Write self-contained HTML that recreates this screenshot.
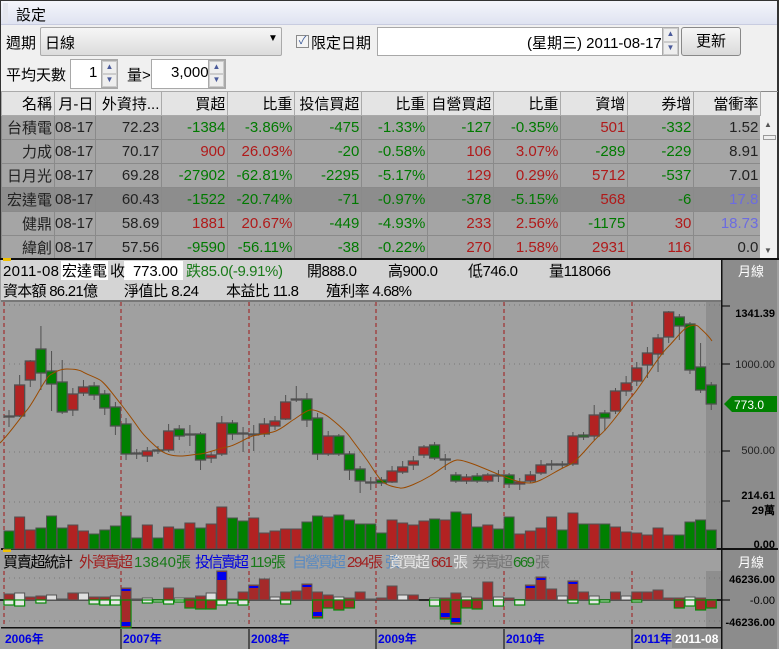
<!DOCTYPE html>
<html><head><meta charset="utf-8">
<style>
*{margin:0;padding:0;box-sizing:border-box}
body{width:779px;height:649px;overflow:hidden;background:#f0f0f0;font-family:"Liberation Sans","Noto Sans CJK TC",sans-serif;font-size:15px;color:#000;position:relative}
.a{position:absolute;white-space:nowrap}
.box{position:absolute;background:#fff;border:1px solid #a8a8a8}
.spin{position:absolute;width:17px;background:#eee;border:1px solid #aaa}
.spin div{height:50%;border:1px solid #ccc;font-size:8px;color:#4a5a9a;text-align:center;line-height:10px}
table{position:absolute;left:1px;top:91px;border-collapse:collapse;table-layout:fixed}
td{height:24px;border:1px solid #8a8a8a;text-align:right;padding-right:2px;font-size:15px;overflow:hidden;white-space:nowrap;background:#a5a5a5;color:#222}
tr.h td{background:#e4e4e4;border-color:#aaa;color:#000}
tr.s td{background:#8d8d8d}
.g{color:#007a00!important}.r{color:#b01a1a!important}.b{color:#6c6ce0!important}
</style></head><body>
<div class="a" style="left:0;top:0;width:779px;height:649px;border:1px solid #333;border-right:2px solid #333"></div>
<div class="a" style="left:1px;top:1px;width:776px;height:24px;background:linear-gradient(#f4f5fb,#dfe3f1);border-bottom:1px solid #c8cce0"></div>
<div class="a" style="left:3px;top:3px;width:5px;height:20px;background:#e4e6ee"></div>
<div class="a" style="left:16px;top:4px">設定</div>
<div class="a" style="left:6px;top:32px">週期</div>
<div class="a" style="left:40px;top:27px;width:242px;height:29px;border:1px solid #aaa;border-radius:2px;background:linear-gradient(#f6f6f6,#dcdcdc)"></div>
<div class="a" style="left:45px;top:32px">日線</div>
<div class="a" style="left:268px;top:33px;font-size:10px">▼</div>
<div class="a" style="left:296px;top:35px;width:13px;height:13px;border:1px solid #8a8a8a;background:#f4f4f4;font-size:11px;line-height:11px;color:#3a5a9a;text-align:center">✓</div>
<div class="a" style="left:311px;top:32px">限定日期</div>
<div class="box" style="left:377px;top:27px;width:302px;height:29px"></div>
<div class="a" style="left:527px;top:32px">(星期三) 2011-08-17</div>
<div class="spin" style="left:662px;top:27px;height:29px"><div>▲</div><div>▼</div></div>
<div class="a" style="left:681px;top:27px;width:60px;height:29px;border:1px solid #888;border-radius:3px;background:linear-gradient(#f6f6f6,#dadada);text-align:center;line-height:27px">更新</div>
<div class="a" style="left:6px;top:64px">平均天數</div>
<div class="box" style="left:70px;top:59px;width:48px;height:30px"></div>
<div class="a" style="left:89px;top:64px">1</div>
<div class="spin" style="left:101px;top:60px;height:28px"><div>▲</div><div>▼</div></div>
<div class="a" style="left:127px;top:64px">量&gt;</div>
<div class="box" style="left:151px;top:59px;width:75px;height:30px"></div>
<div class="a" style="left:171px;top:64px">3,000</div>
<div class="spin" style="left:208px;top:60px;height:28px"><div>▲</div><div>▼</div></div>
<div class="a" style="left:1px;top:91px;width:777px;height:1px;background:#888"></div>
<table>
<colgroup><col style="width:53px"><col style="width:41px"><col style="width:66px"><col style="width:66px"><col style="width:67px"><col style="width:67px"><col style="width:66px"><col style="width:66px"><col style="width:67px"><col style="width:67px"><col style="width:66px"><col style="width:67px"></colgroup>
<tr class="h"><td>名稱</td><td>月-日</td><td>外資持...</td><td>買超</td><td>比重</td><td>投信買超</td><td>比重</td><td>自營買超</td><td>比重</td><td>資增</td><td>券增</td><td>當衝率</td></tr>
<tr><td>台積電</td><td>08-17</td><td>72.23</td><td class="g">-1384</td><td class="g">-3.86%</td><td class="g">-475</td><td class="g">-1.33%</td><td class="g">-127</td><td class="g">-0.35%</td><td class="r">501</td><td class="g">-332</td><td>1.52</td></tr>
<tr><td>力成</td><td>08-17</td><td>70.17</td><td class="r">900</td><td class="r">26.03%</td><td class="g">-20</td><td class="g">-0.58%</td><td class="r">106</td><td class="r">3.07%</td><td class="g">-289</td><td class="g">-229</td><td>8.91</td></tr>
<tr><td>日月光</td><td>08-17</td><td>69.28</td><td class="g">-27902</td><td class="g">-62.81%</td><td class="g">-2295</td><td class="g">-5.17%</td><td class="r">129</td><td class="r">0.29%</td><td class="r">5712</td><td class="g">-537</td><td>7.01</td></tr>
<tr class="s"><td>宏達電</td><td>08-17</td><td>60.43</td><td class="g">-1522</td><td class="g">-20.74%</td><td class="g">-71</td><td class="g">-0.97%</td><td class="g">-378</td><td class="g">-5.15%</td><td class="r">568</td><td class="g">-6</td><td class="b">17.8</td></tr>
<tr><td>健鼎</td><td>08-17</td><td>58.69</td><td class="r">1881</td><td class="r">20.67%</td><td class="g">-449</td><td class="g">-4.93%</td><td class="r">233</td><td class="r">2.56%</td><td class="g">-1175</td><td class="r">30</td><td class="b">18.73</td></tr>
<tr><td>緯創</td><td>08-17</td><td>57.56</td><td class="g">-9590</td><td class="g">-56.11%</td><td class="g">-38</td><td class="g">-0.22%</td><td class="r">270</td><td class="r">1.58%</td><td class="r">2931</td><td class="r">116</td><td>0.0</td></tr>
</table>
<div class="a" style="left:760px;top:116px;width:17px;height:142px;background:#f0f0f0"></div>
<div class="a" style="left:764px;top:120px;font-size:8px;color:#555">▲</div>
<div class="a" style="left:763px;top:135px;width:13px;height:5px;border:1px solid #999;background:#eee"></div>
<div class="a" style="left:764px;top:246px;font-size:8px;color:#555">▼</div>

<svg class="a" style="left:0;top:258px" width="779" height="391" id="ch" xmlns="http://www.w3.org/2000/svg">
<rect x="0" y="0" width="779" height="391" fill="#a0a0a0"/>
<rect x="0" y="0" width="779" height="2" fill="#111"/>
<rect x="1" y="2" width="721" height="41" fill="#d4d4d4"/>
<rect x="1" y="42" width="721" height="2" fill="#777"/>
<rect x="722" y="2" width="55" height="389" fill="#8c8c8c"/>
<rect x="721" y="2" width="1.5" height="389" fill="#111"/>
<rect x="706" y="44" width="15" height="246" fill="#8e8e8e"/>
<rect x="706" y="313" width="15" height="58" fill="#8e8e8e"/>
<rect x="1" y="290" width="777" height="2" fill="#111"/>
<rect x="1" y="369" width="721" height="1.5" fill="#111"/>
<rect x="3" y="0" width="8" height="3" fill="#f0c000"/>
<rect x="3" y="291" width="8" height="3" fill="#f0c000"/>
<g font-size="15" font-family="Liberation Sans,Noto Sans CJK TC,sans-serif" lengthAdjust="spacingAndGlyphs">
<rect x="61" y="3" width="47" height="19" fill="#fff"/>
<rect x="124" y="3" width="59" height="19" fill="#fff"/>
<text x="3" y="18" textLength="56">2011-08</text><text x="62" y="18" textLength="45">宏達電</text><text x="110" y="18" textLength="13">收</text><text x="133" y="18" textLength="45">773.00</text>
<text x="186" y="18" fill="#1a7a1a" textLength="97">跌85.0(-9.91%)</text><text x="307" y="18" textLength="50">開888.0</text><text x="388" y="18" textLength="50">高900.0</text><text x="468" y="18" textLength="50">低746.0</text><text x="549" y="18" textLength="62">量118066</text>
<text x="3" y="38" textLength="95">資本額 86.21億</text><text x="124" y="38" textLength="75">淨值比 8.24</text><text x="226" y="38" textLength="73">本益比 11.8</text><text x="326" y="38" textLength="86">殖利率 4.68%</text>
<text x="738" y="18" fill="#fff" font-size="13">月線</text>
<text x="738" y="309" fill="#fff" font-size="13">月線</text>
<text x="3" y="309" textLength="70">買賣超統計</text><text x="79" y="309" fill="#a02020" textLength="54">外資賣超</text><text x="134" y="309" fill="#1a7a1a" textLength="57">13840張</text>
<text x="195" y="309" fill="#0000e0" textLength="54">投信賣超</text><text x="250" y="309" fill="#1a7a1a" textLength="36">119張</text>
<text x="292" y="309" fill="#5a8ac0" textLength="54">自營買超</text><text x="347" y="309" fill="#a02020" textLength="36">294張</text>
<text x="385" y="309" fill="#5a8ac0" textLength="5">張</text>
<text x="389" y="309" fill="#e8e8e8" textLength="41">資買超</text><text x="431" y="309" fill="#a02020" textLength="22">661</text><text x="453" y="309" fill="#e8e8e8" textLength="13">張</text>
<text x="472" y="309" fill="#777" textLength="41">券賣超</text><text x="513" y="309" fill="#1a7a1a" textLength="22">669</text><text x="535" y="309" fill="#777" textLength="13">張</text>
</g>
<g font-size="11" font-weight="bold" font-family="Liberation Sans,sans-serif">
<text x="775" y="59" text-anchor="end">1341.39</text>
<text x="775" y="110" text-anchor="end" fill="#222" font-weight="normal">1000.00</text>
<text x="775" y="196" text-anchor="end" fill="#222" font-weight="normal">500.00</text>
<text x="775" y="241" text-anchor="end">214.61</text>
<text x="775" y="256" text-anchor="end">29萬</text>
<text x="775" y="290" text-anchor="end">0.00</text>
<text x="775" y="325" text-anchor="end">46236.00</text>
<text x="775" y="346" text-anchor="end" font-weight="normal">-0.00</text>
<text x="775" y="368" text-anchor="end">-46236.00</text>
</g>
<path d="M722 48h8M722 106h8M722 193h8M722 243h8M722 342h8" stroke="#000"/>
<polygon points="724,146 732,138 777,138 777,154 732,154" fill="#008000"/>
<text x="734" y="151" font-size="12" fill="#fff" font-family="Liberation Sans,sans-serif">773.0</text>
<g stroke="#777" stroke-dasharray="1,4"><path d="M4 47H721M4 106H721M4 194H721M4 244H721M4 320H721M4 363H721"/></g>
<g stroke="#a01818" stroke-dasharray="4,3"><path d="M4 44V290M121 44V290M249 44V290M376 44V290M504 44V290M632 44V290M4 313V369M121 313V369M249 313V369M376 313V369M504 313V369M632 313V369"/></g>
<g id="cd"></g>
<path fill="none" stroke="#9a4a00" stroke-width="1" d="M0 185 C10 175 20 160 27 152 S45 120 50 117 S60 111 67 111 S80 112 83 114 S95 119 100 122 S112 135 120 145 S135 165 140 172 S155 188 160 192 S172 198 180 198 S195 196 200 196 S220 190 227 189 S243 182 250 179 S265 176 273 174 S288 165 293 162 S305 153 310 152 S325 156 330 160 S345 172 350 179 S362 195 367 202 S378 220 383 224 S395 229 400 230 S420 224 430 218 S450 203 457 202 S490 213 500 217 S520 225 530 225 S555 213 567 208 S590 185 600 177 S625 146 633 137 S657 100 667 90 S683 70 690 68 S698 68 700 70 S708 77 712 83"/>
<line x1="0" y1="342" x2="721" y2="342" stroke="#000" stroke-width="1.5"/>
<g id="bb"></g>
<g font-size="12" font-weight="bold" fill="#0000e0" font-family="Liberation Sans,Noto Sans CJK TC,sans-serif">
<text x="5" y="385">2006年</text><text x="123" y="385">2007年</text><text x="251" y="385">2008年</text><text x="378" y="385">2009年</text><text x="506" y="385">2010年</text><text x="634" y="385">2011年</text>
</g>
<rect x="672" y="371" width="49" height="19" fill="#8c8c8c"/>
<text x="675" y="385" font-size="12" font-weight="bold" fill="#fff" font-family="Liberation Sans,sans-serif">2011-08</text>
<path d="M121 371V391M249 371V391M376 371V391M504 371V391M632 371V391" stroke="#000"/>
</svg>
<script>
var C=[[416,416,410,427],[416,385,375,417],[380,361,360,387],[349,373,326,390],[371,384,351,411],[382,412,360,414],[410,394,388,416],[393,387,380,396],[386,395,382,400],[394,408,390,415],[407,426,402,435],[424,454,418,460],[453,453,449,459],[456,451,447,462],[450,450,446,454],[450,431,424,452],[429,436,425,440],[434,434,425,446],[434,460,432,470],[458,455,452,463],[454,423,416,456],[423,434,420,440],[433,433,427,452],[434,434,425,451],[434,424,418,437],[426,421,416,430],[419,402,395,420],[399,399,386,402],[399,420,393,427],[418,454,413,460],[454,436,431,456],[436,454,434,456],[454,470,451,480],[469,481,466,493],[482,482,477,490],[480,483,477,486],[482,471,466,483],[472,467,461,474],[465,461,456,470],[455,447,445,458],[445,458,442,460],[459,459,454,470],[475,481,472,483],[481,477,474,484],[476,481,473,483],[481,475,473,483],[475,475,470,482],[475,484,473,488],[484,482,478,490],[481,475,471,483],[473,465,460,475],[464,464,460,470],[464,464,461,468],[464,436,432,466],[435,437,432,440],[436,415,405,440],[413,418,410,431],[411,391,388,414],[391,383,376,396],[381,368,362,386],[365,353,347,378],[354,338,334,372],[337,312,311,343],[317,326,314,340],[324,370,322,374],[367,390,343,393],[385,404,382,410]];
var V=[531,517,530,528,516,528,525,531,534,530,526,516,538,525,538,527,529,523,528,524,507,518,521,518,533,531,529,529,522,516,517,515,520,524,524,533,520,523,525,521,519,520,512,514,527,525,529,517,534,531,528,517,530,513,524,524,524,527,532,533,535,528,535,535,522,520,530];
var U=[6,7,3,4,5,1,7,7,3,3,4,12,1,2,0,12,2,2,4,7,29,1,8,15,21,3,8,9,16,8,5,3,2,8,1,2,14,5,5,0,2,2,7,3,2,18,3,2,0,15,23,11,4,19,8,4,0,8,4,8,8,10,2,2,3,2,0];
var D=[5,6,0,3,0,0,0,0,4,5,5,28,0,3,2,4,2,8,9,9,5,3,5,0,0,0,4,0,0,18,8,10,8,0,0,0,0,0,0,0,6,19,24,8,9,0,6,0,5,0,0,0,0,3,0,4,2,0,0,2,0,0,0,8,6,10,8];
var s='',b='',ch=258;
for(var i=0;i<C.length;i++){var c=C[i],x=4+i*10.64,o=c[0]-ch,cl=c[1]-ch,h=c[2]-ch,l=c[3]-ch;
var up=cl<o||(cl==o&&i%2),col=cl==o?'#505050':(up?'#b22222':'#008000');
s+='<line x1="'+(x+5)+'" y1="'+h+'" x2="'+(x+5)+'" y2="'+l+'" stroke="#505050"/>';
var t=Math.min(o,cl),hh=Math.max(Math.abs(o-cl),1);
s+='<rect x="'+x+'" y="'+t+'" width="10" height="'+hh+'" fill="'+col+'" stroke="#505050" stroke-width="1.3"/>';
var vc=(cl<o)?'#b22222':(cl>o?'#008000':(i%2?'#b22222':'#008000'));
s+='<rect x="'+x+'" y="'+(V[i]-ch)+'" width="10" height="'+(549-V[i])+'" fill="'+vc+'" stroke="#505050" stroke-width="1"/>';
var z=342,u=U[i],d=D[i];
if(u>0){var uc=(u>=8?'#a52a2a':(i%3==1?'#e0e0e0':'#a52a2a'));b+='<rect x="'+x+'" y="'+(z-u)+'" width="10" height="'+u+'" fill="'+uc+'" stroke="#555" stroke-width="1"/>';if(u>=12&&i%3!=0)b+='<rect x="'+(x+0.5)+'" y="'+(z-u+1)+'" width="9" height="'+(i==20?8:2)+'" fill="#0000ee"/>';}
if(d>0){var dc=(d>=8?'#a52a2a':'#e8e8e8');b+='<rect x="'+x+'" y="'+z+'" width="10" height="'+d+'" fill="'+dc+'" stroke="#0a8a0a" stroke-width="1.2"/>';if(d>=15)b+='<rect x="'+(x+0.5)+'" y="'+(z+d-6)+'" width="9" height="4" fill="#0000ee"/>';}
}
document.getElementById('cd').innerHTML=s;document.getElementById('bb').innerHTML=b;
</script>
</body></html>
